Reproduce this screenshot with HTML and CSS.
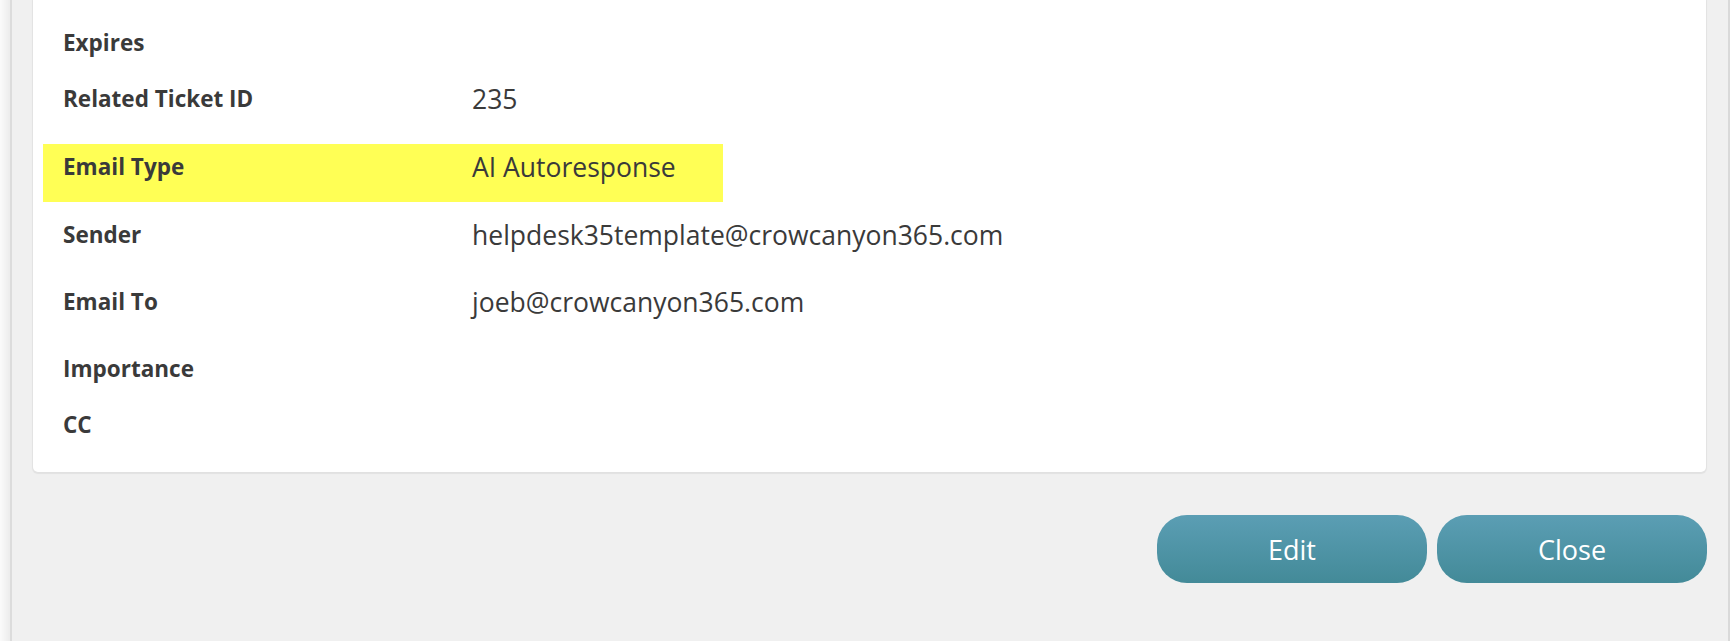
FILE: index.html
```html
<!DOCTYPE html>
<html lang="en">
<head>
<meta charset="utf-8">
<title>Email details</title>
<link rel="stylesheet" href="styles.css">
</head>
<body>
<div class="frame">
  <div class="edge-glow"></div>
  <div class="edge-line"></div>
  <main class="main">
    <section class="card">
      <div class="fields">
        <div class="row">
          <div class="label">Expires</div>
          <div class="value"></div>
        </div>
        <div class="row has-value">
          <div class="label">Related Ticket ID</div>
          <div class="value">235</div>
        </div>
        <div class="row has-value highlight">
          <div class="label">Email Type</div>
          <div class="value">AI Autoresponse</div>
        </div>
        <div class="row has-value">
          <div class="label">Sender</div>
          <div class="value">helpdesk35template@crowcanyon365.com</div>
        </div>
        <div class="row has-value">
          <div class="label">Email To</div>
          <div class="value">joeb@crowcanyon365.com</div>
        </div>
        <div class="row">
          <div class="label">Importance</div>
          <div class="value"></div>
        </div>
        <div class="row">
          <div class="label">CC</div>
          <div class="value"></div>
        </div>
      </div>
    </section>
    <div class="actions">
      <button class="btn" type="button">Edit</button>
      <button class="btn" type="button">Close</button>
    </div>
  </main>
  <div class="edge-line right"></div>
</div>
</body>
</html>
```
FILE: styles.css
```css
html, body {
  margin: 0;
  padding: 0;
  height: 100%;
}
body {
  background: #f0f0f0;
  font-family: "Open Sans", "Noto Sans", "Liberation Sans", sans-serif;
  color: #3a3a3a;
  overflow: hidden;
}
.frame {
  display: flex;
  height: 641px;
}
.edge-glow {
  width: 10px;
  flex: none;
  background: linear-gradient(to right, #fbfbfb, #ececec);
}
.edge-line {
  width: 2px;
  flex: none;
  background: #dcdcdc;
}
.edge-line.right {
  background: #d9d9d9;
}
.main {
  flex: 1;
  padding: 0 22px 0 21px;
  display: flex;
  flex-direction: column;
}
.card {
  background: #ffffff;
  border-radius: 0 0 5px 5px;
  box-shadow: 0 1px 1px 1px rgba(0, 0, 0, 0.06);
  padding: 12px 0 22px 10px;
}
.fields {
  display: flex;
  flex-direction: column;
}
.row {
  display: flex;
  align-items: flex-start;
  padding: 13px 0 10px 20px;
}
.row.has-value {
  padding-bottom: 13px;
}
.label {
  width: 409px;
  flex: none;
  font-size: 22.5px;
  line-height: 30px;
  padding-top: 3px;
  font-weight: 700;
  color: #3a3a3a;
}
.value {
  font-size: 26.5px;
  line-height: 36px;
  color: #3a3a3a;
}
.row.has-value .value {
  padding-bottom: 5px;
}
.row.highlight {
  background: #ffff55;
  width: 660px;
  margin: 9px 0 2px;
  padding-top: 5px;
  padding-bottom: 12px;
}
.actions {
  display: flex;
  justify-content: flex-end;
  gap: 10px;
  margin-top: 43px;
  margin-right: -1px;
}
.btn {
  width: 270px;
  height: 68px;
  border: none;
  border-radius: 30px;
  background: linear-gradient(to bottom, #5b9eb4, #438a98);
  color: #ffffff;
  font-family: "Open Sans", "Noto Sans", "Liberation Sans", sans-serif;
  font-size: 27px;
  padding: 0;
  cursor: pointer;
}
```
